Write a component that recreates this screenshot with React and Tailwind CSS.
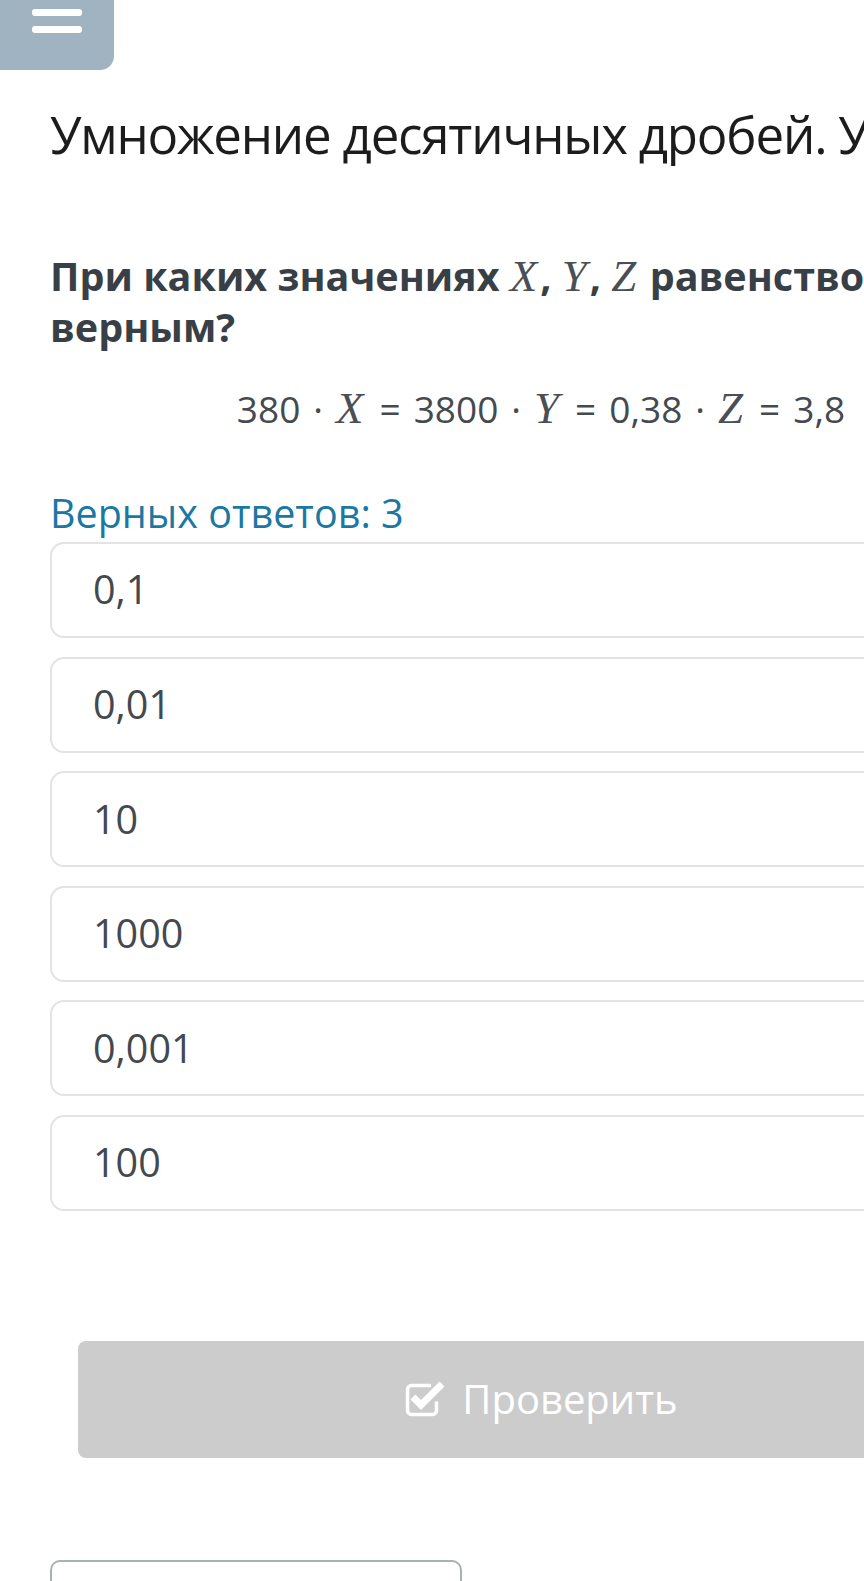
import React from 'react';

const answers = ['0,1', '0,01', '10', '1000', '0,001', '100'];

const MathVar = ({ children, size = 'text-[45px]' }) => (
    <span className={`font-['Liberation_Serif',serif] italic font-normal ${size} leading-none text-[#4a4f55] inline-block pr-[3px]`}>
        {children}
    </span>
);

const CheckSquare = () => (
    <svg width="42" height="36" viewBox="0 0 42 36" fill="none">
        <path d="M27 4.5H7.5a4 4 0 0 0-4 4v21a4 4 0 0 0 4 4h21a4 4 0 0 0 4-4v-9" stroke="white" strokeWidth="3.5" />
        <path d="M9 16l8 8L38 3" stroke="white" strokeWidth="7" strokeLinejoin="miter" />
    </svg>
);

const App = () => {
    return (
        <div className="w-[864px] h-[1581px] overflow-hidden bg-white font-['Open_Sans',sans-serif]">
            {/* Menu button */}
            <div className="w-[114px] h-[70px] bg-[#9fb3c0] rounded-br-[14px] overflow-hidden flex flex-col items-center">
                <div className="flex flex-col gap-[10px] -mt-[8px]">
                    <span className="block w-[50px] h-[7px] rounded-[3px] bg-white" />
                    <span className="block w-[50px] h-[7px] rounded-[3px] bg-white" />
                    <span className="block w-[50px] h-[7px] rounded-[3px] bg-white" />
                </div>
            </div>

            <div className="ml-[50px] w-[982px]">
                <h1 className="mt-[29px] text-[51px] leading-[70px] tracking-[-1.2px] font-normal text-[#1c1c1c] whitespace-nowrap">
                    Умножение десятичных дробей. Урок 3
                </h1>

                <p className="mt-[82px] text-[39.5px] leading-[51px] font-bold text-[#393f46] whitespace-nowrap">
                    При каких значениях <MathVar size="text-[45px]">X</MathVar>, <MathVar size="text-[45px]">Y</MathVar>,{' '}
                    <MathVar size="text-[45px]">Z</MathVar> равенство будет
                    <br />
                    верным?
                </p>

                <div className="mt-[31px] h-[50px] flex items-baseline justify-center gap-[13px] text-[37px] leading-[50px] text-[#454a50] whitespace-nowrap">
                    <span>380</span>
                    <span>·</span>
                    <MathVar>X</MathVar>
                    <span>=</span>
                    <span>3800</span>
                    <span>·</span>
                    <MathVar>Y</MathVar>
                    <span>=</span>
                    <span>0,38</span>
                    <span>·</span>
                    <MathVar>Z</MathVar>
                    <span>=</span>
                    <span>3,8</span>
                </div>

                <div className="mt-[54px] text-[39.5px] leading-[50px] text-[#1b78a2]">Верных ответов: 3</div>

                <div className="mt-[4px] flex flex-col gap-[18.6px]">
                    {answers.map((a) => (
                        <div
                            key={a}
                            className="h-[96px] border-2 border-[#e3e3e3] rounded-[14px] flex items-center pl-[41px] text-[39.5px] text-[#44494f]"
                        >
                            {a}
                        </div>
                    ))}
                </div>

                <div className="mt-[130px] mx-[28px] h-[117px] bg-[#cccccc] rounded-[8px] flex items-center justify-center gap-[16px] text-white text-[40px]">
                    <CheckSquare />
                    <span>Проверить</span>
                </div>

                <div className="mt-[102px] w-[412px] h-[40px] border-2 border-b-0 border-[#a9b0b0] rounded-t-[10px]" />
            </div>
        </div>
    );
};

export default App;
